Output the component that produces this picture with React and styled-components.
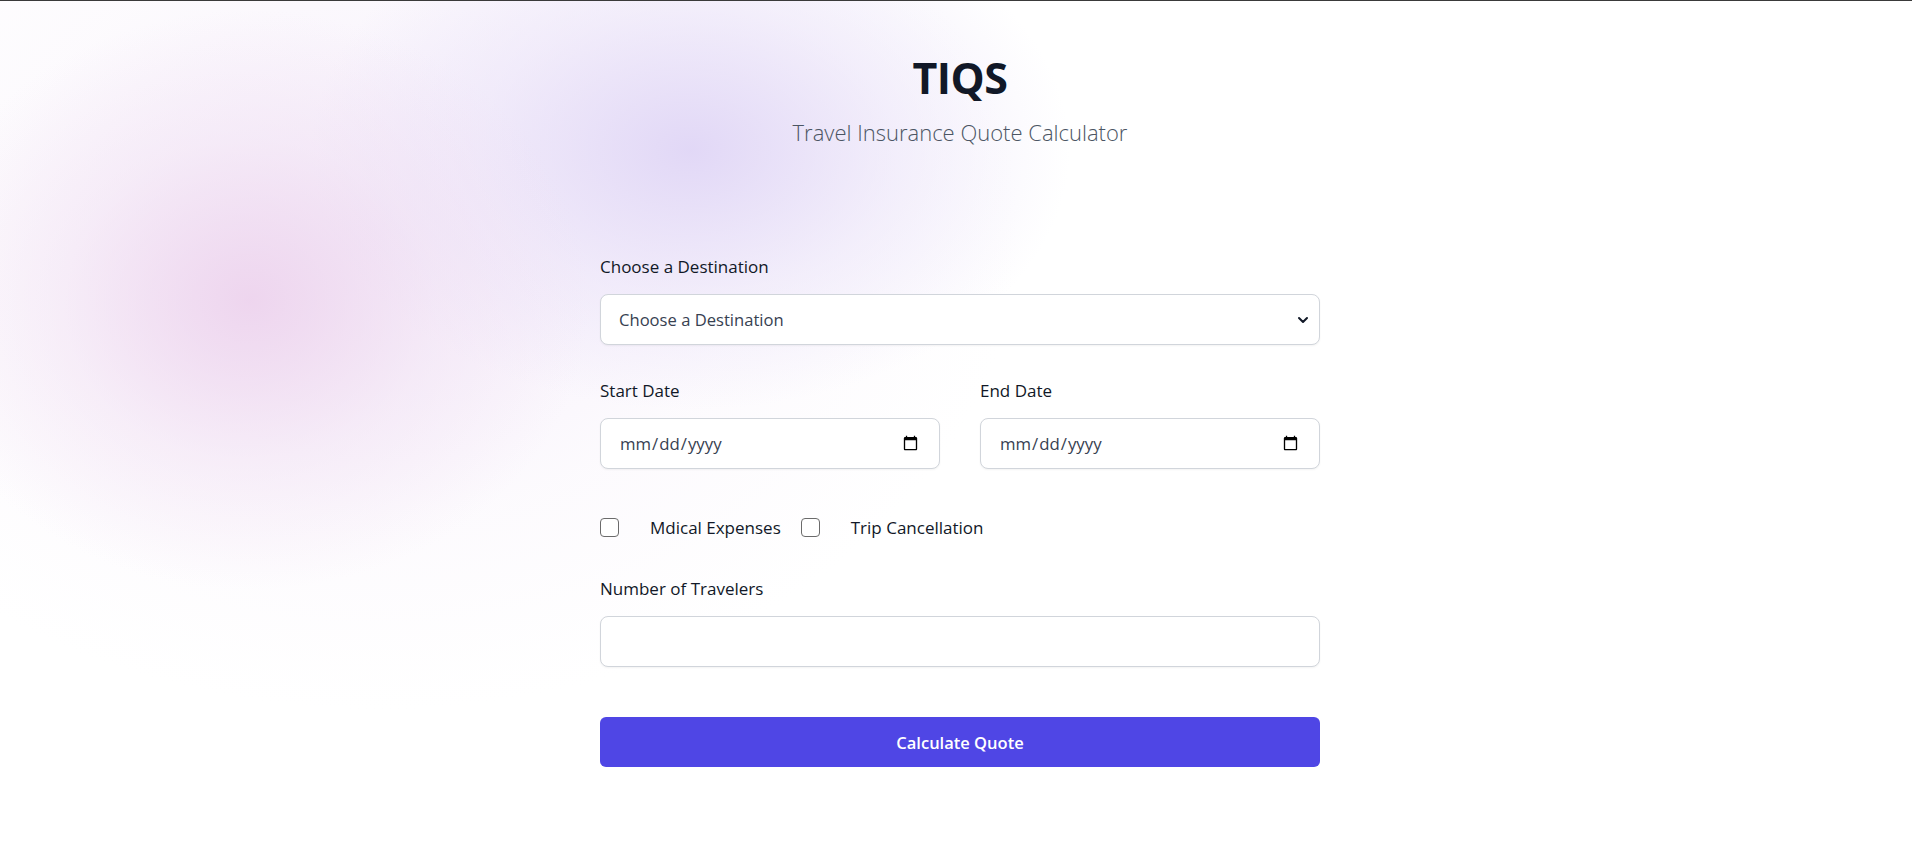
import styled, { createGlobalStyle } from "styled-components";

const GlobalStyle = createGlobalStyle`
	html, body {
		margin: 0;
		padding: 0;
	}
	body {
		min-height: 867px;
		border-top: 1px solid #3a3a3a;
		font-family: "Open Sans", "Noto Sans", sans-serif;
		color: #111827;
		background-color: #ffffff;
		background-image:
			radial-gradient(ellipse 340px 290px at 250px 300px, rgba(236, 208, 236, 0.85), rgba(240, 222, 242, 0.45) 55%, rgba(255, 255, 255, 0) 100%),
			radial-gradient(ellipse 380px 260px at 690px 150px, rgba(224, 214, 246, 0.95), rgba(232, 224, 248, 0.5) 55%, rgba(255, 255, 255, 0) 100%),
			radial-gradient(ellipse 640px 480px at 380px 230px, rgba(244, 236, 250, 0.9), rgba(250, 246, 252, 0.5) 60%, rgba(255, 255, 255, 0) 100%);
		background-repeat: no-repeat;
	}
	* {
		box-sizing: border-box;
	}
`;

const Page = () => {
	return (
		<>
			<GlobalStyle />
			<MainContainer>
				<Header>
					<Title>TIQS</Title>
					<Subtitle>Travel Insurance Quote Calculator</Subtitle>
				</Header>
				<Form onSubmit={(e) => e.preventDefault()}>
					<Field>
						<Label htmlFor="destination">Choose a Destination</Label>
						<SelectWrap>
							<Select id="destination" defaultValue="">
								<option value="">Choose a Destination</option>
								<option value="europe">Europe</option>
								<option value="asia">Asia</option>
								<option value="america">America</option>
							</Select>
							<Chevron width="12" height="12" viewBox="0 0 12 12">
								<path d="M2 4l4 4 4-4" fill="none" stroke="#111827" strokeWidth="2" strokeLinecap="round" strokeLinejoin="round" />
							</Chevron>
						</SelectWrap>
					</Field>
					<DateRow>
						<Field>
							<Label htmlFor="start">Start Date</Label>
							<Input id="start" type="date" />
						</Field>
						<Field>
							<Label htmlFor="end">End Date</Label>
							<Input id="end" type="date" />
						</Field>
					</DateRow>
					<CheckRow>
						<CheckItem>
							<Checkbox type="checkbox" />
							<CheckText>Mdical Expenses</CheckText>
						</CheckItem>
						<CheckItem>
							<Checkbox type="checkbox" />
							<CheckText>Trip Cancellation</CheckText>
						</CheckItem>
					</CheckRow>
					<Field>
						<Label htmlFor="travelers">Number of Travelers</Label>
						<Input id="travelers" type="number" />
					</Field>
					<Button type="submit">Calculate Quote</Button>
				</Form>
			</MainContainer>
		</>
	);
};

export default Page;

const MainContainer = styled.div`
	display: flex;
	flex-direction: column;
	align-items: center;
	padding: 52px 0 0 8px;
`;

const Header = styled.header`
	display: flex;
	flex-direction: column;
	align-items: center;
	gap: 14px;
`;

const Title = styled.h1`
	margin: 0;
	font-size: 43px;
	line-height: 50px;
	font-weight: 700;
	color: #111827;
	letter-spacing: -0.5px;
`;

const Subtitle = styled.p`
	margin: 0;
	font-size: 22px;
	line-height: 30px;
	font-weight: 300;
	color: #4b5563;
`;

const Form = styled.form`
	width: 720px;
	margin-top: 109px;
	display: flex;
	flex-direction: column;
	gap: 35px;
`;

const Field = styled.div`
	display: flex;
	flex-direction: column;
	gap: 16px;
	flex: 1;
`;

const Label = styled.label`
	font-size: 17px;
	line-height: 22px;
	font-weight: 500;
	color: #111827;
`;

const SelectWrap = styled.div`
	position: relative;
`;

const Select = styled.select`
	appearance: none;
	width: 100%;
	height: 51px;
	padding: 0 40px 0 18px;
	font-family: inherit;
	font-size: 16.6px;
	color: #374151;
	background: #ffffff;
	border: 1px solid #d1d5db;
	border-radius: 8px;
	box-shadow: 0 1px 2px rgba(0, 0, 0, 0.05);
`;

const Chevron = styled.svg`
	position: absolute;
	right: 11px;
	top: 20px;
	pointer-events: none;
`;

const Input = styled.input`
	width: 100%;
	height: 51px;
	padding: 0 18px;
	font-family: inherit;
	font-size: 16.8px;
	color: #374151;
	background: #ffffff;
	border: 1px solid #d1d5db;
	border-radius: 8px;
	box-shadow: 0 1px 2px rgba(0, 0, 0, 0.05);
`;

const DateRow = styled.div`
	display: flex;
	gap: 40px;
`;

const CheckRow = styled.div`
	display: flex;
	align-items: center;
	gap: 20px;
	padding: 12px 0 4px;
`;

const CheckItem = styled.label`
	display: flex;
	align-items: center;
	gap: 31px;
`;

const Checkbox = styled.input`
	appearance: none;
	margin: 0;
	width: 19px;
	height: 19px;
	border: 1.5px solid #6b6b6b;
	border-radius: 4px;
	background: #ffffff;
`;

const CheckText = styled.span`
	font-size: 17px;
	font-weight: 500;
	color: #111827;
`;

const Button = styled.button`
	margin-top: 15px;
	height: 50px;
	width: 100%;
	border: none;
	border-radius: 6px;
	background: #4f46e5;
	color: #ffffff;
	font-family: inherit;
	font-size: 16.5px;
	font-weight: 600;
`;
